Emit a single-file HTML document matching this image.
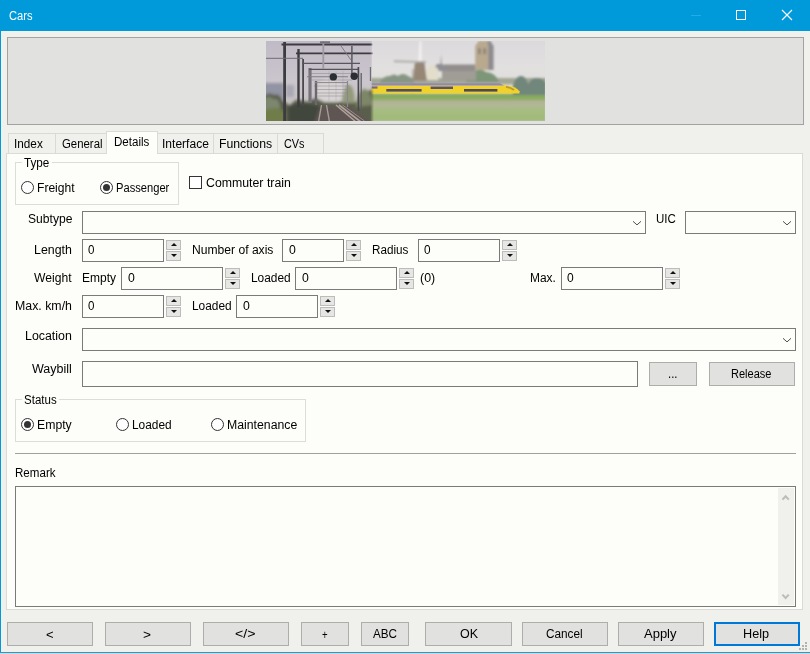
<!DOCTYPE html>
<html><head><meta charset="utf-8"><title>Cars</title>
<style>
html,body{margin:0;padding:0}
body{width:810px;height:654px;overflow:hidden;position:relative;background:#f0f0ed;font:12px/14px "Liberation Sans",sans-serif;color:#000}
div,span,svg{position:absolute;box-sizing:border-box}
.t{white-space:pre;transform-origin:0 0;line-height:14px;font-size:12px}
.title{left:0;top:0;width:810px;height:31px;background:#0099d9}
.lb{left:0;top:31px;width:1px;height:623px;background:#0099d9}
.bb{left:0;top:652px;width:810px;height:1px;background:#1a9fd8}
.bb2{left:0;top:653px;width:810px;height:1px;background:#dbd2cc}
.banner{left:7px;top:37px;width:797px;height:88px;border:1px solid #a2a2a0;background:#e1e1df}
.pane{left:6px;top:153px;width:797px;height:457px;border:1px solid #dadad7;background:#fdfdf9}
.tab{top:133px;height:20px;border:1px solid #d9d9d6;border-bottom:none;background:#f0f0ed}
.tab.sel{top:131px;height:23px;background:#fdfdf9;border-color:#dadad7}
.grp{border:1px solid #dcdcd9}
.gl{background:#fdfdf9;height:4px}
.rad{width:13px;height:13px;border:1px solid #333;border-radius:50%;background:#fff}
.rad.on::after{content:"";position:absolute;left:2px;top:2px;width:7px;height:7px;border-radius:50%;background:#333}
.chk{width:13px;height:13px;border:1px solid #333;background:#fff}
.fld{border:1px solid #7a7a7a;background:#fdfdf9;height:23px}
.spb{width:15px;height:10px;border:1px solid #bcbcba;background:#e6e6e4}
.spb i{position:absolute;left:4px;width:0;height:0;border-left:3px solid transparent;border-right:3px solid transparent}
.spb.u i{top:2px;border-bottom:3px solid #111}
.spb.d i{top:2px;border-top:3px solid #111}
.btn{top:622px;height:24px;border:1px solid #adadab;background:#e1e1df}
.btn.def{border:2px solid #0078d7}
.sep{left:15px;top:453px;width:781px;height:1px;background:#a0a0a0}
.sb{background:#f0f0ed}

</style></head>
<body>
<div class="title"></div><div class="lb"></div><div class="bb"></div><div class="bb2"></div>
<svg style="left:680px;top:0" width="130" height="31" viewBox="0 0 130 31"><path d="M11 15.5h10" stroke="#22aee4" stroke-width="1" fill="none"/><rect x="56.5" y="10.5" width="9" height="9" stroke="#fff" stroke-width="1" fill="none"/><path d="M102 10l10 10M112 10l-10 10" stroke="#fff" stroke-width="1.1" fill="none"/></svg>
<div class="banner"></div>
<svg style="left:266px;top:41px" width="279" height="80" viewBox="0 0 279 80">
<defs>
<linearGradient id="skyL" x1="0" y1="0" x2="0" y2="1"><stop offset="0" stop-color="#bfbac5"/><stop offset="0.5" stop-color="#cbc6cd"/><stop offset="0.75" stop-color="#c6c2c2"/><stop offset="1" stop-color="#97947f"/></linearGradient>
<linearGradient id="skyR" x1="0" y1="0" x2="0" y2="1"><stop offset="0" stop-color="#dbd9dc"/><stop offset="0.35" stop-color="#e2e0df"/><stop offset="1" stop-color="#dad8d2"/></linearGradient>
<linearGradient id="fadeLR" x1="0" y1="0" x2="1" y2="0"><stop offset="0" stop-color="#e2e0de" stop-opacity="0"/><stop offset="1" stop-color="#e2e0de" stop-opacity="1"/></linearGradient>
<linearGradient id="field" x1="0" y1="0" x2="0" y2="1"><stop offset="0" stop-color="#84a65a"/><stop offset="0.2" stop-color="#8cae62"/><stop offset="0.27" stop-color="#b2b296"/><stop offset="0.45" stop-color="#b0b894"/><stop offset="0.6" stop-color="#a5bd80"/><stop offset="1" stop-color="#9fba7a"/></linearGradient>
<filter id="b1" x="-5%" y="-5%" width="110%" height="110%"><feGaussianBlur stdDeviation="1.0"/></filter><filter id="b3" x="-5%" y="-10%" width="110%" height="120%"><feGaussianBlur stdDeviation="0.75"/></filter>
<filter id="b2" x="-5%" y="-5%" width="110%" height="110%"><feGaussianBlur stdDeviation="1.4"/></filter>
<filter id="b0" x="-5%" y="-5%" width="110%" height="110%"><feGaussianBlur stdDeviation="0.65"/></filter>
<clipPath id="cp"><rect width="279" height="80"/></clipPath><clipPath id="cl"><rect width="106.3" height="80"/></clipPath>
<linearGradient id="mg" x1="0" y1="0" x2="1" y2="0"><stop offset="0" stop-color="#fff"/><stop offset="0.965" stop-color="#fff"/><stop offset="1" stop-color="#000"/></linearGradient><mask id="mk" maskUnits="userSpaceOnUse" x="0" y="0" width="108" height="80"><rect width="108" height="80" fill="url(#mg)"/></mask>
</defs>
<g clip-path="url(#cp)">
<rect width="279" height="80" fill="url(#skyR)"/>
<!-- right: horizon, field -->
<g filter="url(#b1)">
<rect x="100" y="52.6" width="180" height="28" fill="url(#field)"/>
<!-- horizon band -->
<rect x="100" y="37" width="180" height="6.5" fill="#a3a896"/>
<path d="M114 41 q4 -7 10 -6 q4 -3 8 0 q5 -4 10 0 l6 3 v4 h-34z" fill="#879684"/>
<!-- far trees right -->
<path d="M247 54 v-10 q3 -9 8 -9 q5 0 7 8 q3 -6 8 -6 q7 0 10 5 v12z" fill="#72877c"/>
<path d="M200 41 q2 -10 9 -11 q6 -3 11 1 q9 0 13 10z" fill="#7b9677"/>
<!-- church -->
<rect x="176" y="24.5" width="34" height="15" fill="#a09c96"/>
<path d="M175 30 l3 -6.5 h31 v6.5z" fill="#928e8e"/>
<path d="M166 30 l5 -7 h6 l3 7z" fill="#8e8e94"/>
<path d="M209.2 29 v-24 l3.5 -5 h9.5 l1.5 5 v24z" fill="#b9a98f"/>
<path d="M222.4 29 v-24 l-1 -5 h3 l3.2 5 v24z" fill="#8e8b90"/>
<rect x="212.2" y="7.2" width="2.4" height="6" fill="#8a8078"/><rect x="217.4" y="7.2" width="2.4" height="6" fill="#8a8078"/>
<path d="M174.2 23 l0.9 -10 l0.9 10z" fill="#a8a6aa"/>
<!-- white house + windmill -->
<path d="M160.7 39 v-11 l5 -5 l6.6 5 v11z" fill="#e2decb"/>
<path d="M147 39.5 l1.8 -17.5 h9.6 l2.4 17.5z" fill="#968676"/>
<path d="M150 22.4 l4 -3.4 l4.6 3.4z" fill="#8a7e78"/>
<path d="M152.6 20 l0.9 -20 h1.8 l0.3 20z" fill="#f4f3f0"/>
<path d="M128 19.2 l32 1 v1.9 l-32 -0.9z" fill="#aeaca9"/>
<rect x="146.3" y="28" width="1" height="24" fill="#9a9890"/>
</g>
<!-- train -->
<g filter="url(#b3)">
<path d="M101 44.3 h138 q11 1 14.5 6 v2.3 h-152.5z" fill="#f0d22a"/>
<path d="M98 42.2 h136 l4 2.3 h-140z" fill="#9186b4"/>
<rect x="98" y="45.4" width="13.5" height="2.2" fill="#6f6896"/>
<rect x="120.3" y="48" width="35.3" height="2.6" fill="#4f4c68"/>
<rect x="164.6" y="45.5" width="22.4" height="2.5" fill="#55527a"/>
<rect x="198" y="48" width="33.4" height="2.6" fill="#4c4a5c"/>
<path d="M240 45.8 q5 0.6 8 3.2" stroke="#b8983c" stroke-width="1.8" fill="none"/>
</g>
<!-- left photo -->
<g mask="url(#mk)">
<rect x="0" y="0" width="106" height="80" fill="url(#skyL)"/>
<g filter="url(#b2)">
<ellipse cx="64" cy="50" rx="14" ry="13" fill="#d8d4d4"/>
<rect x="-3" y="42" width="21" height="17" fill="#9293a3"/>
<rect x="20" y="44" width="8" height="12" fill="#aaa8b4"/>
<path d="M-3 83 v-27 q6 -6 11 -2 q5 -2 8 5 l8 6 q6 -8 10 -6 l8 2 q6 -6 12 -2 l4 2 h34 q10 -14 16 -12 l10 8 v26z" fill="#5a5e4c"/>
<path d="M-3 60 q5 -8 10 -2 q5 -2 7 6 v6 h-17z" fill="#7d866e"/>
<path d="M-3 83 v-13 q10 -5 18 -2 l4 4 v11z" fill="#6f7d4a"/>
<path d="M76 62 q1 -18 7 -18 q5 0 6 18z" fill="#929a7a"/>
<path d="M90 66 q2 -16 8 -18 q6 0 9 16z" fill="#7d8666"/>
<path d="M22 83 v-18 q10 -4 22 -2 l10 2 v18z" fill="#43463e"/>
<path d="M54 65 h30 l24 18 h-60z" fill="#5e5652"/>
</g>
<g filter="url(#b0)">
<!-- tracks -->
<path d="M55.5 64 l-3 17 M60.5 64 l3 17" stroke="#a89c98" stroke-width="1.4" fill="none"/>
<path d="M70 64 l20 17 M73 64 l22 17" stroke="#b0a29a" stroke-width="1.6" fill="none"/>
<path d="M76.5 64 l22 16" stroke="#9a8e88" stroke-width="1" fill="none"/>
<!-- catenary fine lines -->
<g stroke="#8f8a92" stroke-width="0.7" fill="none" opacity="0.8">
<path d="M44 32.5 h44 M46 39 h40 M48 45 h36 M50 48.5 h32 M51 52 h30 M52 55 h27"/>
<path d="M63 30 v30 M70 30 v30 M77 30 v28" opacity="0.5"/>
</g>
<!-- poles & beams -->
<g stroke="#3d3b41" fill="none">
<path d="M18.6 1 v80" stroke-width="2.8"/>
<path d="M15.5 3.6 h91" stroke-width="2"/>
<path d="M32.5 8 v58" stroke-width="2.4"/>
<path d="M30 12.4 h77" stroke-width="1.8"/>
<path d="M37.1 18 v47" stroke-width="1.8" stroke="#4a484e"/>
<path d="M36 22.3 h58" stroke-width="1.3" stroke="#5a575f"/>
<path d="M44 27 v35" stroke-width="3.2" stroke="#77737b"/>
<path d="M43 28.4 h49" stroke-width="1.3" stroke="#55525a"/>
<path d="M50 40 v24" stroke-width="2.4" stroke="#6a676e"/>
<path d="M41 35.8 h41" stroke-width="1.1" stroke="#807c84"/>
<path d="M49 41.6 h33" stroke-width="1" stroke="#8a868e"/>
<path d="M85.9 5 v30" stroke-width="1.5" stroke="#5a575f"/>
<path d="M92.4 26 v44" stroke-width="1.7" stroke="#4a484e"/>
<path d="M95.2 32 v36" stroke-width="1.3" stroke="#625f66"/>
<path d="M81.5 40 v26" stroke-width="1.2" stroke="#8a868c"/>
<path d="M104.5 26 v14" stroke-width="1.3" stroke="#66636a"/>
<path d="M57.3 0 v28" stroke-width="1.9" stroke="#a09aa2"/>
<path d="M75 5 l10 14" stroke-width="0.9" stroke="#77747c"/>
<path d="M0 17.3 h37" stroke-width="1" stroke="#6f6c74"/>
<path d="M54 1.4 h10" stroke-width="2.2" stroke="#77737b"/>
</g>
<circle cx="67.3" cy="35.9" r="3.7" fill="#2c2e32"/>
<circle cx="88.2" cy="35.2" r="3.7" fill="#2c2e32"/>
</g>
<rect x="100" y="0" width="8" height="80" fill="url(#fadeLR)" opacity="0.0"/>
</g>
</g>
</svg>

<div class="pane"></div>
<div class="tab" style="left:8px;width:48px"></div>
<div class="tab" style="left:55px;width:52px"></div>
<div class="tab" style="left:157px;width:57px"></div>
<div class="tab" style="left:213px;width:65px"></div>
<div class="tab" style="left:277px;width:47px"></div>
<div class="tab sel" style="left:106px;width:52px"></div>
<div class="grp" style="left:15px;top:162px;width:164px;height:43px"></div><div class="gl" style="left:22px;top:160px;width:30px"></div>
<div class="grp" style="left:15px;top:399px;width:291px;height:43px"></div><div class="gl" style="left:22px;top:397px;width:37px"></div>
<div class="rad" style="left:21px;top:181px"></div>
<div class="rad on" style="left:100px;top:181px"></div>
<div class="rad on" style="left:21px;top:418px"></div>
<div class="rad" style="left:116px;top:418px"></div>
<div class="rad" style="left:211px;top:418px"></div>
<div class="chk" style="left:189px;top:176px"></div>
<div class="fld" style="left:82px;top:211px;width:564px;height:23px"></div>
<svg style="left:632px;top:220px" width="10" height="7" viewBox="0 0 10 7"><path d="M1 1.3L5 4.9L9 1.3" stroke="#505050" stroke-width="1" fill="none"/></svg>
<div class="fld" style="left:685px;top:211px;width:111px;height:23px"></div>
<svg style="left:782px;top:220px" width="10" height="7" viewBox="0 0 10 7"><path d="M1 1.3L5 4.9L9 1.3" stroke="#505050" stroke-width="1" fill="none"/></svg>
<div class="fld" style="left:82px;top:239px;width:82px;height:23px"></div>
<div class="spb u" style="left:166px;top:240px"><i></i></div><div class="spb d" style="left:166px;top:251px"><i></i></div>
<div class="fld" style="left:282px;top:239px;width:62px;height:23px"></div>
<div class="spb u" style="left:346px;top:240px"><i></i></div><div class="spb d" style="left:346px;top:251px"><i></i></div>
<div class="fld" style="left:418px;top:239px;width:82px;height:23px"></div>
<div class="spb u" style="left:502px;top:240px"><i></i></div><div class="spb d" style="left:502px;top:251px"><i></i></div>
<div class="fld" style="left:121px;top:267px;width:102px;height:23px"></div>
<div class="spb u" style="left:225px;top:268px"><i></i></div><div class="spb d" style="left:225px;top:279px"><i></i></div>
<div class="fld" style="left:295px;top:267px;width:102px;height:23px"></div>
<div class="spb u" style="left:399px;top:268px"><i></i></div><div class="spb d" style="left:399px;top:279px"><i></i></div>
<div class="fld" style="left:561px;top:267px;width:102px;height:23px"></div>
<div class="spb u" style="left:665px;top:268px"><i></i></div><div class="spb d" style="left:665px;top:279px"><i></i></div>
<div class="fld" style="left:82px;top:295px;width:82px;height:23px"></div>
<div class="spb u" style="left:166px;top:296px"><i></i></div><div class="spb d" style="left:166px;top:307px"><i></i></div>
<div class="fld" style="left:236px;top:295px;width:82px;height:23px"></div>
<div class="spb u" style="left:320px;top:296px"><i></i></div><div class="spb d" style="left:320px;top:307px"><i></i></div>
<div class="fld" style="left:82px;top:328px;width:714px;height:23px"></div>
<svg style="left:782px;top:337px" width="10" height="7" viewBox="0 0 10 7"><path d="M1 1.3L5 4.9L9 1.3" stroke="#505050" stroke-width="1" fill="none"/></svg>
<div class="fld" style="left:82px;top:361px;width:556px;height:26px"></div>
<div class="btn" style="left:649px;top:362px;width:48px"></div><div class="btn" style="left:709px;top:362px;width:86px"></div>
<div class="sep"></div>
<div class="fld" style="left:15px;top:486px;width:781px;height:121px"></div>
<div class="sb" style="left:778px;top:488px;width:16px;height:117px"></div>
<svg style="left:781px;top:493px" width="10" height="8" viewBox="0 0 10 8"><path d="M1.4 6.6L4.6 3.2L7.8 6.6" stroke="#bcbcba" stroke-width="2.1" fill="none"/></svg>
<svg style="left:781px;top:593px" width="10" height="8" viewBox="0 0 10 8"><path d="M1.4 1.6L4.6 5L7.8 1.6" stroke="#bcbcba" stroke-width="2.1" fill="none"/></svg>
<div class="btn" style="left:7px;width:86px"></div>
<div class="btn" style="left:105px;width:86px"></div>
<div class="btn" style="left:203px;width:86px"></div>
<div class="btn" style="left:301px;width:48px"></div>
<div class="btn" style="left:361px;width:48px"></div>
<div class="btn" style="left:425px;width:87px"></div>
<div class="btn" style="left:522px;width:86px"></div>
<div class="btn" style="left:618px;width:86px"></div>
<div class="btn def" style="left:714px;width:86px"></div>
<svg style="left:798px;top:640px" width="12" height="12"><rect x="7" y="2" width="2" height="2" fill="#b2b2b0"/><rect x="4" y="5" width="2" height="2" fill="#b2b2b0"/><rect x="7" y="5" width="2" height="2" fill="#b2b2b0"/><rect x="1" y="8" width="2" height="2" fill="#b2b2b0"/><rect x="4" y="8" width="2" height="2" fill="#b2b2b0"/><rect x="7" y="8" width="2" height="2" fill="#b2b2b0"/></svg>
<span class="t" style="left:9.25px;top:9px;color:#fff;transform:scaleX(0.9313)">Cars</span>
<span class="t" style="left:13.82px;top:137px;transform:scaleX(0.9800)">Index</span>
<span class="t" style="left:61.74px;top:137px;transform:scaleX(0.9491)">General</span>
<span class="t" style="left:114.23px;top:135px;transform:scaleX(0.9635)">Details</span>
<span class="t" style="left:161.70px;top:137px;transform:scaleX(1.0043)">Interface</span>
<span class="t" style="left:219.48px;top:137px;transform:scaleX(1.0211)">Functions</span>
<span class="t" style="left:283.97px;top:137px;transform:scaleX(0.9073)">CVs</span>
<span class="t" style="left:23.82px;top:156px;transform:scaleX(0.9750)">Type</span>
<span class="t" style="left:36.69px;top:181px;transform:scaleX(1.0067)">Freight</span>
<span class="t" style="left:115.96px;top:181px;transform:scaleX(0.9290)">Passenger</span>
<span class="t" style="left:205.78px;top:176px;transform:scaleX(1.0260)">Commuter train</span>
<span class="t" style="left:28.19px;top:212px;transform:scaleX(1.0083)">Subtype</span>
<span class="t" style="left:655.73px;top:212px;transform:scaleX(0.9599)">UIC</span>
<span class="t" style="left:34.48px;top:243px;transform:scaleX(1.0311)">Length</span>
<span class="t" style="left:191.69px;top:243px;transform:scaleX(1.0088)">Number of axis</span>
<span class="t" style="left:371.72px;top:243px;transform:scaleX(0.9733)">Radius</span>
<span class="t" style="left:33.69px;top:271px;transform:scaleX(1.0101)">Weight</span>
<span class="t" style="left:81.90px;top:271px;transform:scaleX(0.9995)">Empty</span>
<span class="t" style="left:250.91px;top:271px;transform:scaleX(0.9910)">Loaded</span>
<span class="t" style="left:419.97px;top:271px;transform:scaleX(1.0323)">(0)</span>
<span class="t" style="left:530.00px;top:271px;transform:scaleX(0.9953)">Max.</span>
<span class="t" style="left:14.68px;top:299px;transform:scaleX(1.0288)">Max. km/h</span>
<span class="t" style="left:191.71px;top:299px;transform:scaleX(0.9910)">Loaded</span>
<span class="t" style="left:25.47px;top:329px;transform:scaleX(1.0324)">Location</span>
<span class="t" style="left:32.47px;top:362px;transform:scaleX(1.0425)">Waybill</span>
<span class="t" style="left:23.73px;top:393px;transform:scaleX(0.9592)">Status</span>
<span class="t" style="left:36.68px;top:418px;transform:scaleX(1.0210)">Empty</span>
<span class="t" style="left:131.71px;top:418px;transform:scaleX(0.9910)">Loaded</span>
<span class="t" style="left:226.68px;top:418px;transform:scaleX(1.0220)">Maintenance</span>
<span class="t" style="left:14.73px;top:466px;transform:scaleX(0.9651)">Remark</span>
<span class="t" style="left:88.33px;top:243px;transform:scaleX(0.9645)">0</span>
<span class="t" style="left:288.58px;top:243px;transform:scaleX(1.0213)">0</span>
<span class="t" style="left:423.81px;top:243px;transform:scaleX(0.9835)">0</span>
<span class="t" style="left:127.58px;top:271px;transform:scaleX(1.0213)">0</span>
<span class="t" style="left:301.58px;top:271px;transform:scaleX(1.0213)">0</span>
<span class="t" style="left:567.30px;top:271px;transform:scaleX(1.0024)">0</span>
<span class="t" style="left:88.33px;top:299px;transform:scaleX(0.9645)">0</span>
<span class="t" style="left:242.58px;top:299px;transform:scaleX(1.0213)">0</span>
<span class="t" style="left:667.64px;top:367px;transform:scaleX(0.9518)">...</span>
<span class="t" style="left:731.36px;top:367px;transform:scaleX(0.9195)">Release</span>
<span class="t" style="left:45.63px;top:628px;transform:scaleX(1.0863)">&lt;</span>
<span class="t" style="left:143.39px;top:628px;transform:scaleX(1.1397)">&gt;</span>
<span class="t" style="left:235.26px;top:627px;transform:scaleX(1.1780)">&lt;/&gt;</span>
<span class="t" style="left:321.86px;top:628px;transform:scaleX(0.8013)">+</span>
<span class="t" style="left:372.52px;top:627px;transform:scaleX(0.9748)">ABC</span>
<span class="t" style="left:459.87px;top:627px;transform:scaleX(1.0412)">OK</span>
<span class="t" style="left:546.41px;top:627px;transform:scaleX(0.9817)">Cancel</span>
<span class="t" style="left:644.13px;top:627px;transform:scaleX(1.0827)">Apply</span>
<span class="t" style="left:743.35px;top:627px;transform:scaleX(1.0564)">Help</span>
</body></html>
